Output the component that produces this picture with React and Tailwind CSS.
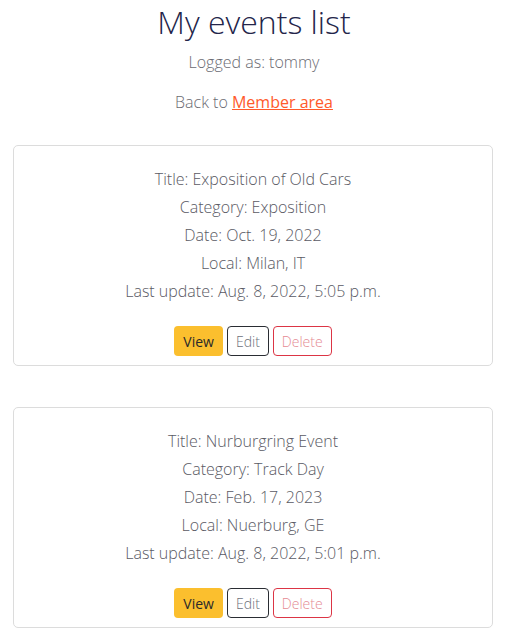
import React from "react";

const events = [
    {
        title: "Exposition of Old Cars",
        category: "Exposition",
        date: "Oct. 19, 2022",
        local: "Milan, IT",
        updated: "Aug. 8, 2022, 5:05 p.m.",
    },
    {
        title: "Nurburgring Event",
        category: "Track Day",
        date: "Feb. 17, 2023",
        local: "Nuerburg, GE",
        updated: "Aug. 8, 2022, 5:01 p.m.",
    },
];

function EventCard({ ev }) {
    return (
        <div className="border border-[#dcdcdc] rounded-[5px] pt-[19px] pb-[9px] text-center">
            <div className="text-[16px] leading-[28px] text-[#5a5a64]">
                <p>Title: {ev.title}</p>
                <p>Category: {ev.category}</p>
                <p>Date: {ev.date}</p>
                <p>Local: {ev.local}</p>
                <p>Last update: {ev.updated}</p>
            </div>
            <div className="mt-[21px] flex justify-center gap-[4px] text-[14px]">
                <button className="h-[30px] px-[9px] rounded-[4px] bg-[#fbbf2e] text-[#2a2a2a] font-normal">View</button>
                <button className="h-[30px] px-[8px] rounded-[4px] border border-[#2a2d33] text-[#6c6f7a]">Edit</button>
                <button className="h-[30px] px-[8px] rounded-[4px] border border-[#dc3545] text-[#e58a93]">Delete</button>
            </div>
        </div>
    );
}

export default function App() {
    return (
        <div className="min-h-screen bg-white font-['Open_Sans',sans-serif] font-light px-[13px] pt-[2px]">
            <h1 className="text-center text-[32px] leading-[40px] text-[#23254a] font-light">My events list</h1>
            <p className="text-center text-[16px] mt-[8px] text-[#6b6b73]">Logged as: tommy</p>
            <p className="text-center text-[16px] mt-[16px] text-[#6b6b73]">
                Back to{" "}
                <a href="#" className="text-[#ff5a2b] underline font-normal">Member area</a>
            </p>
            <div className="mt-[31px] flex flex-col gap-[41px] w-[480px]">
                {events.map((ev) => (
                    <EventCard key={ev.title} ev={ev} />
                ))}
            </div>
        </div>
    );
}
